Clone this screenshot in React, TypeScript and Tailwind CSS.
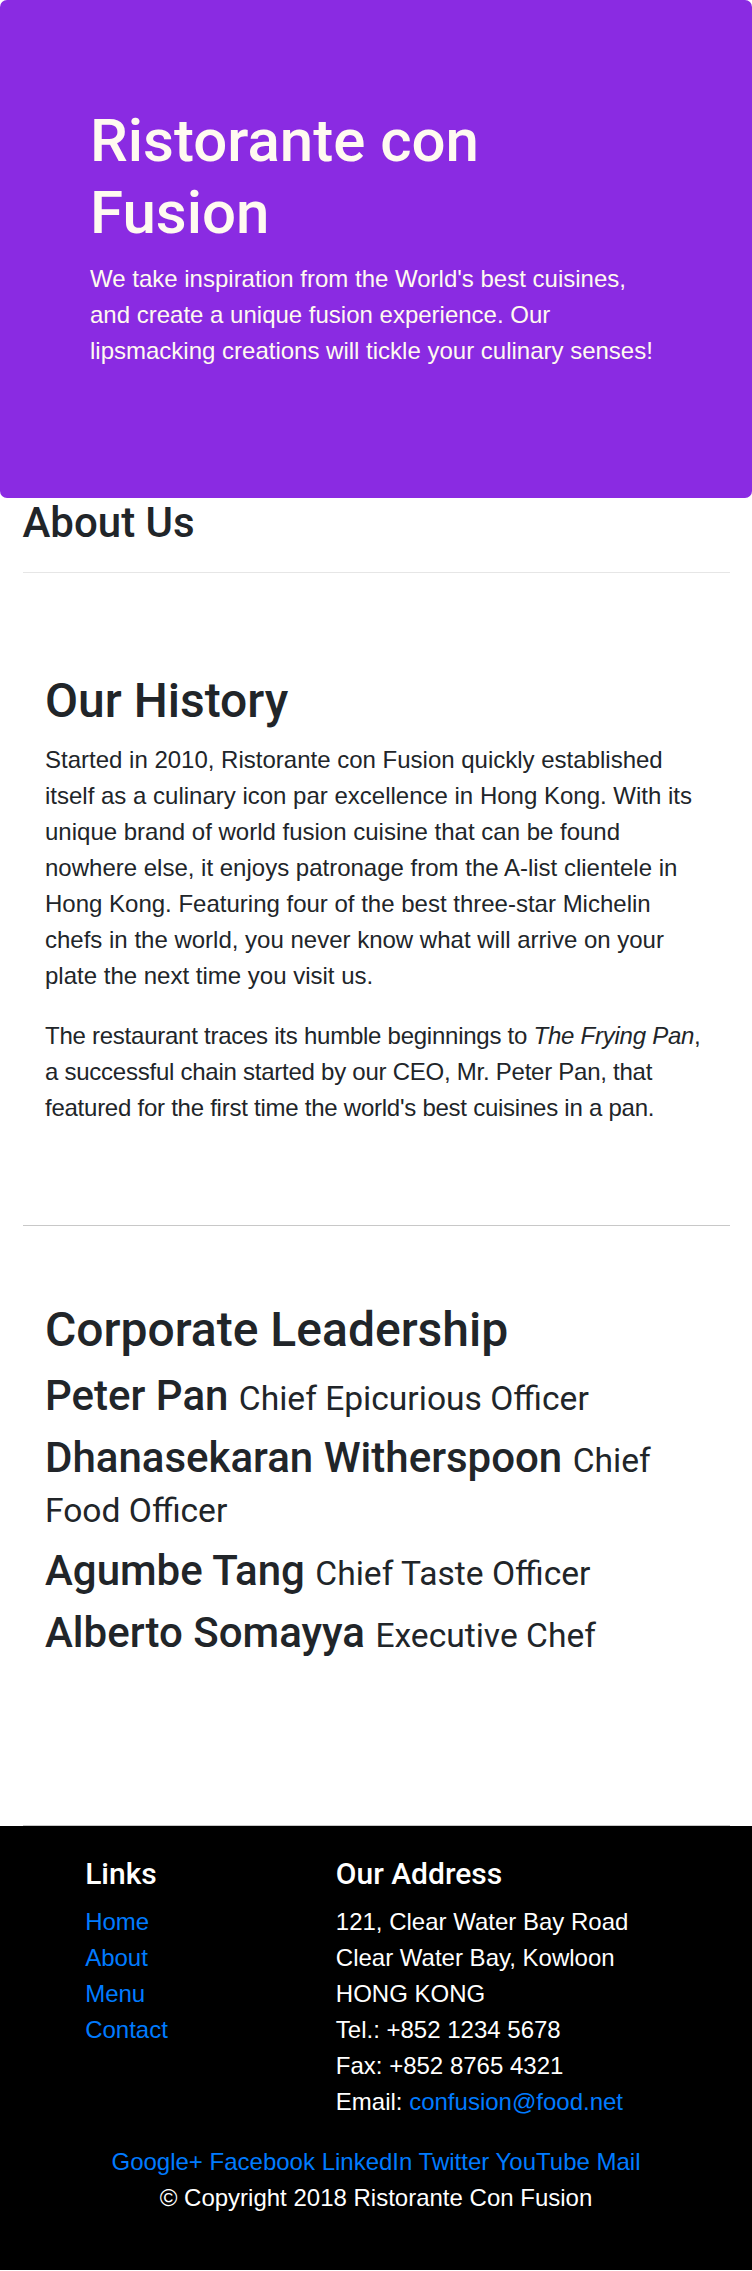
import React from "react";

const leaders = [
  { name: "Peter Pan", designation: "Chief Epicurious Officer" },
  { name: "Dhanasekaran Witherspoon", designation: "Chief Food Officer" },
  { name: "Agumbe Tang", designation: "Chief Taste Officer" },
  { name: "Alberto Somayya", designation: "Executive Chef" },
];

const links = ["Home", "About", "Menu", "Contact"];
const socials = ["Google+", "Facebook", "LinkedIn", "Twitter", "YouTube", "Mail"];

const App: React.FC = () => {
  return (
    <div className="min-h-screen bg-white font-['Liberation_Sans',Arial,sans-serif] text-[24px] leading-[1.5] text-[#212529]">
      <header className="rounded-[7px] bg-[#8a2be2] px-[45px] py-[105px] text-[#fffaf0]">
        <div className="px-[45px]">
          <h1 className="mb-[12px] font-['Roboto',sans-serif] text-[60px] leading-[1.2] font-medium">
            Ristorante con Fusion
          </h1>
          <p className="mb-[24px]">
            We take inspiration from the World's best cuisines, and create a
            unique fusion experience. Our lipsmacking creations will tickle your
            culinary senses!
          </p>
        </div>
      </header>

      <div className="px-[22.5px]">
        <h3 className="mb-[12px] font-['Roboto',sans-serif] text-[42px] leading-[1.2] font-medium">
          About Us
        </h3>
        <hr className="my-[24px] border-t-[1.5px] border-[#e6e6e6]" />

        <section className="min-h-[600px] border-b-[1.5px] border-[#c8c8c8] px-[22.5px] py-[75px]">
          <h2 className="mb-[12px] font-['Roboto',sans-serif] text-[48px] leading-[1.2] font-medium">
            Our History
          </h2>
          <p className="mb-[24px]">
            Started in 2010, Ristorante con Fusion quickly established itself as
            a culinary icon par excellence in Hong Kong. With its unique brand of
            world fusion cuisine that can be found nowhere else, it enjoys
            patronage from the A-list clientele in Hong Kong. Featuring four of
            the best three-star Michelin chefs in the world, you never know what
            will arrive on your plate the next time you visit us.
          </p>
          <p className="mb-[24px] tracking-[-0.25px]">
            The restaurant traces its humble beginnings to <em>The Frying Pan</em>,
            a successful chain started by our CEO, Mr. Peter Pan, that featured
            for the first time the world's best cuisines in a pan.
          </p>
        </section>

        <section className="min-h-[600px] border-b-[1.5px] border-[#c8c8c8] px-[22.5px] py-[75px]">
          <h2 className="mb-[12px] font-['Roboto',sans-serif] text-[48px] leading-[1.2] font-medium">
            Corporate Leadership
          </h2>
          {leaders.map((leader) => (
            <h3
              key={leader.name}
              className="mb-[12px] font-['Roboto',sans-serif] text-[42px] leading-[1.2] font-medium"
            >
              {leader.name}{" "}
              <small className="text-[80%] font-normal">{leader.designation}</small>
            </h3>
          ))}
        </section>
      </div>

      <footer className="bg-black py-[30px] text-white">
        <div className="flex flex-wrap">
          <div className="ml-[8.333333%] w-[33.333333%] px-[22.5px]">
            <h5 className="mb-[12px] font-['Roboto',sans-serif] text-[30px] leading-[1.2] font-medium">
              Links
            </h5>
            <ul className="mb-[24px]">
              {links.map((link) => (
                <li key={link}>
                  <a href="#" className="text-[#007bff]">
                    {link}
                  </a>
                </li>
              ))}
            </ul>
          </div>
          <div className="w-[58.333333%] px-[22.5px]">
            <h5 className="mb-[12px] font-['Roboto',sans-serif] text-[30px] leading-[1.2] font-medium">
              Our Address
            </h5>
            <address className="mb-[24px] not-italic">
              121, Clear Water Bay Road
              <br />
              Clear Water Bay, Kowloon
              <br />
              HONG KONG
              <br />
              Tel.: +852 1234 5678
              <br />
              Fax: +852 8765 4321
              <br />
              Email:{" "}
              <a href="#" className="text-[#007bff]">
                confusion@food.net
              </a>
            </address>
          </div>
          <div className="w-full px-[22.5px] text-center">
            {socials.map((s, i) => (
              <React.Fragment key={s}>
                {i > 0 && " "}
                <a href="#" className="text-[#007bff]">
                  {s}
                </a>
              </React.Fragment>
            ))}
          </div>
        </div>
        <div className="flex justify-center">
          <p className="mb-[24px] px-[22.5px]">© Copyright 2018 Ristorante Con Fusion</p>
        </div>
      </footer>
    </div>
  );
};

export default App;
